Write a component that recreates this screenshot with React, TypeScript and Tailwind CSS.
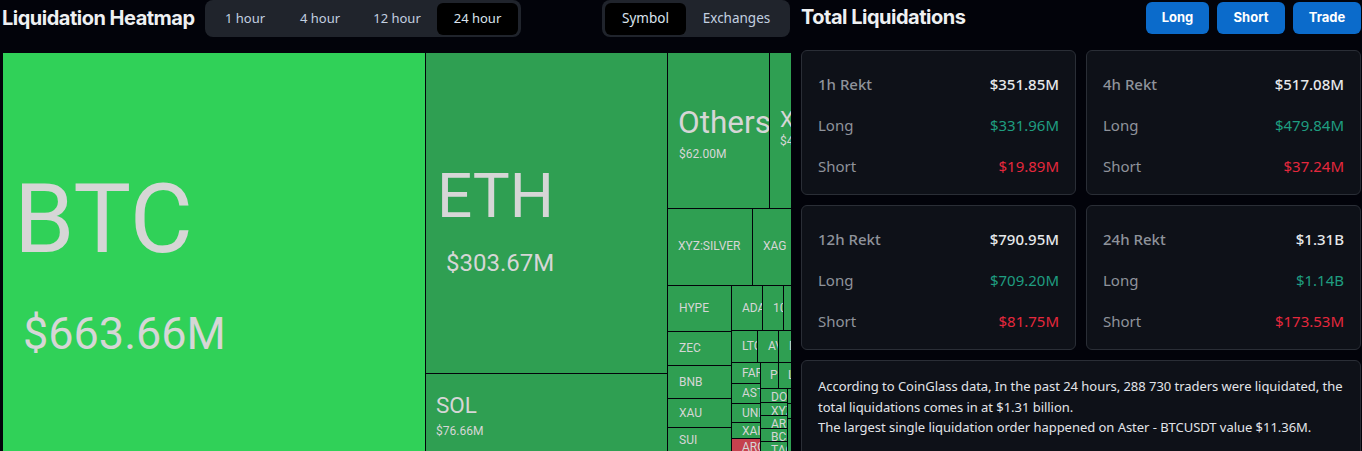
import React from 'react';

type Tile = {
  x: number;
  y: number;
  w: number;
  h: number;
  label?: string;
  size?: number;
  pad?: number;
  top?: number;
  price?: string;
  priceSize?: number;
  pricePad?: number;
  gap?: number;
  color?: string;
};

const GREEN = '#2f9f52';

// treemap tiles, coordinates inside the chart
const tiles: Tile[] = [
  { x: 0, y: 0, w: 422, h: 398, label: 'BTC', size: 97, pad: 11, top: 111, price: '$663.66M', priceSize: 45, pricePad: 20, gap: 31, color: '#30d158' },
  { x: 423, y: 0, w: 241, h: 320, label: 'ETH', size: 62, pad: 11, top: 107, price: '$303.67M', priceSize: 24, pricePad: 20, gap: 18 },
  { x: 423, y: 321, w: 241, h: 77, label: 'SOL', size: 22.5, pad: 10, top: 19, price: '$76.66M', priceSize: 12, pricePad: 10, gap: 5 },
  { x: 665, y: 0, w: 101, h: 155, label: 'Others', size: 31.5, pad: 10, top: 52, price: '$62.00M', priceSize: 12, pricePad: 11, gap: 6 },
  { x: 767, y: 0, w: 21, h: 155, label: 'XRP', size: 22, pad: 10, top: 54, price: '$48.12M', priceSize: 12, pricePad: 10, gap: 2 },
  { x: 665, y: 156, w: 84, h: 76, label: 'XYZ:SILVER', size: 12, pad: 10, top: 29 },
  { x: 750, y: 156, w: 38, h: 76, label: 'XAG', size: 12, pad: 10, top: 29 },
  { x: 665, y: 233, w: 63, h: 45, label: 'HYPE', size: 12, pad: 11, top: 14 },
  { x: 665, y: 279, w: 63, h: 33, label: 'ZEC', size: 12, pad: 11, top: 8 },
  { x: 665, y: 313, w: 63, h: 32, label: 'BNB', size: 12, pad: 11, top: 8 },
  { x: 665, y: 346, w: 63, h: 28, label: 'XAU', size: 12, pad: 11, top: 6 },
  { x: 665, y: 375, w: 63, h: 23, label: 'SUI', size: 12, pad: 11, top: 4 },
  { x: 729, y: 233, w: 30, h: 44, label: 'ADA', size: 12, pad: 10, top: 14 },
  { x: 760, y: 233, w: 20, h: 44, label: '1000', size: 12, pad: 10, top: 14 },
  { x: 781, y: 233, w: 7, h: 44 },
  { x: 729, y: 278, w: 25, h: 31, label: 'LTC', size: 12, pad: 10, top: 7 },
  { x: 755, y: 278, w: 20, h: 31, label: 'AVAX', size: 12, pad: 10, top: 7 },
  { x: 776, y: 278, w: 12, h: 31, label: 'D', size: 12, pad: 10, top: 7 },
  { x: 729, y: 310, w: 28, h: 20, label: 'FARTCOIN', size: 12, pad: 10, top: 2 },
  { x: 729, y: 331, w: 28, h: 19, label: 'ASTER', size: 12, pad: 10, top: 1 },
  { x: 729, y: 351, w: 28, h: 18, label: 'UNI', size: 12, pad: 10, top: 1 },
  { x: 729, y: 370, w: 28, h: 15, label: 'XAI', size: 12, pad: 10, top: 0 },
  { x: 729, y: 386, w: 28, h: 12, label: 'ARC', size: 12, pad: 10, top: 0, color: '#c5424e' },
  { x: 758, y: 310, w: 17, h: 25, label: 'PEPE', size: 12, pad: 9, top: 4 },
  { x: 776, y: 310, w: 12, h: 25, label: 'L', size: 12, pad: 9, top: 4 },
  { x: 758, y: 336, w: 26, h: 13, label: 'DOGE', size: 12, pad: 10, top: 0 },
  { x: 758, y: 350, w: 26, h: 12, label: 'XYZ', size: 12, pad: 10, top: 0 },
  { x: 758, y: 363, w: 26, h: 12, label: 'ARB', size: 12, pad: 10, top: 0 },
  { x: 758, y: 376, w: 26, h: 12, label: 'BCH', size: 12, pad: 10, top: 0 },
  { x: 758, y: 389, w: 26, h: 9, label: 'TAO', size: 12, pad: 10, top: 0 },
  { x: 785, y: 336, w: 3, h: 14 },
  { x: 785, y: 351, w: 3, h: 14 },
  { x: 785, y: 366, w: 3, h: 32 },
];

const cards = [
  { name: '1h Rekt', total: '$351.85M', long: '$331.96M', short: '$19.89M' },
  { name: '4h Rekt', total: '$517.08M', long: '$479.84M', short: '$37.24M' },
  { name: '12h Rekt', total: '$790.95M', long: '$709.20M', short: '$81.75M' },
  { name: '24h Rekt', total: '$1.31B', long: '$1.14B', short: '$173.53M' },
];

const Heatmap = () => (
  <div className="relative ml-[3px] h-[398px] w-[788px] overflow-hidden font-['Roboto',sans-serif] text-[#d6d6d6]">
    {tiles.map((t, i) => (
      <div
        key={i}
        className="absolute overflow-hidden"
        style={{
          left: t.x,
          top: t.y,
          width: t.w,
          height: t.h,
          backgroundColor: t.color ?? GREEN,
          paddingTop: t.top ?? 0,
        }}
      >
        {t.label && (
          <div
            className="whitespace-nowrap"
            style={{ fontSize: t.size, lineHeight: `${Math.max(t.size ?? 12, 14) * 1.15}px`, paddingLeft: t.pad }}
          >
            {t.label}
          </div>
        )}
        {t.price && (
          <div
            className="whitespace-nowrap"
            style={{ fontSize: t.priceSize, lineHeight: `${(t.priceSize ?? 12) * 1.2}px`, paddingLeft: t.pricePad, marginTop: t.gap }}
          >
            {t.price}
          </div>
        )}
      </div>
    ))}
  </div>
);

const StatCard = ({ name, total, long, short }: (typeof cards)[number]) => (
  <div className="flex h-[145px] flex-col justify-center gap-[19px] rounded-md border border-[#2a2e36] bg-[#0e1118] px-4 pt-[4px] text-[15px] leading-[22px]">
    <div className="flex justify-between">
      <span className="font-medium text-[#8f939b]">{name}</span>
      <span className="font-medium text-[#e6e8ea]">{total}</span>
    </div>
    <div className="flex justify-between">
      <span className="text-[#8f939b]">Long</span>
      <span className="text-[#1f9d80]">{long}</span>
    </div>
    <div className="flex justify-between">
      <span className="text-[#8f939b]">Short</span>
      <span className="text-[#e5283d]">{short}</span>
    </div>
  </div>
);

export default function App() {
  return (
    <div className="flex h-[451px] w-[1362px] overflow-hidden bg-[#02030a] font-['Noto_Sans',sans-serif]">
      <div className="w-[791px] shrink-0">
        <div className="flex h-[53px] items-start">
          <h1 className="mt-[5px] ml-[2px] w-[203px] font-['Inter',sans-serif] text-[20px] leading-[26px] font-bold tracking-[-0.5px] whitespace-nowrap text-[#eef0f2]">
            Liquidation Heatmap
          </h1>
          <div className="flex h-[37px] w-[316px] items-center justify-between rounded-lg bg-[#20242c] pr-[3px] pl-[3px] text-[13px] text-[#c3d0e0]">
            <span className="w-[74px] text-center">1 hour</span>
            <span className="w-[74px] text-center">4 hour</span>
            <span className="w-[78px] text-center">12 hour</span>
            <span className="flex h-[32px] w-[81px] items-center justify-center rounded-md bg-black text-[#dbe4ee]">24 hour</span>
          </div>
          <div className="ml-[81px] flex h-[37px] w-[188px] items-center rounded-lg bg-[#20242c] pl-[3px] text-[13.5px] text-[#c3d0e0]">
            <span className="flex h-[32px] w-[81px] items-center justify-center rounded-md bg-black text-[#dbe4ee]">Symbol</span>
            <span className="w-[101px] text-center">Exchanges</span>
          </div>
        </div>
        <Heatmap />
      </div>
      <div className="ml-[10px] w-[560px] shrink-0">
        <div className="flex h-[50px] items-start justify-between">
          <h2 className="mt-[4px] font-['Inter',sans-serif] text-[20px] leading-[26px] font-bold tracking-[-0.5px] whitespace-nowrap text-[#eef0f2]">
            Total Liquidations
          </h2>
          <div className="mt-[2px] flex gap-2 font-['Inter',sans-serif] text-[13px] font-bold text-white">
            <button className="h-[32px] w-[63px] rounded-md bg-[#0b6bcb]">Long</button>
            <button className="h-[32px] w-[68px] rounded-md bg-[#0b6bcb]">Short</button>
            <button className="h-[32px] w-[68px] rounded-md bg-[#0b6bcb]">Trade</button>
          </div>
        </div>
        <div className="grid grid-cols-[275px_275px] gap-[10px]">
          {cards.map((c) => (
            <StatCard key={c.name} {...c} />
          ))}
          <div className="col-span-2 h-[110px] rounded-md border border-[#2a2e36] bg-[#0e1118] px-4 pt-[15px] text-[13px] leading-[20.5px] tracking-[-0.04px] whitespace-nowrap text-[#e2e4e8]">
            According to CoinGlass data, In the past 24 hours, 288 730 traders were liquidated, the
            <br />
            total liquidations comes in at $1.31 billion.
            <br />
            The largest single liquidation order happened on Aster - BTCUSDT value $11.36M.
          </div>
        </div>
      </div>
    </div>
  );
}
